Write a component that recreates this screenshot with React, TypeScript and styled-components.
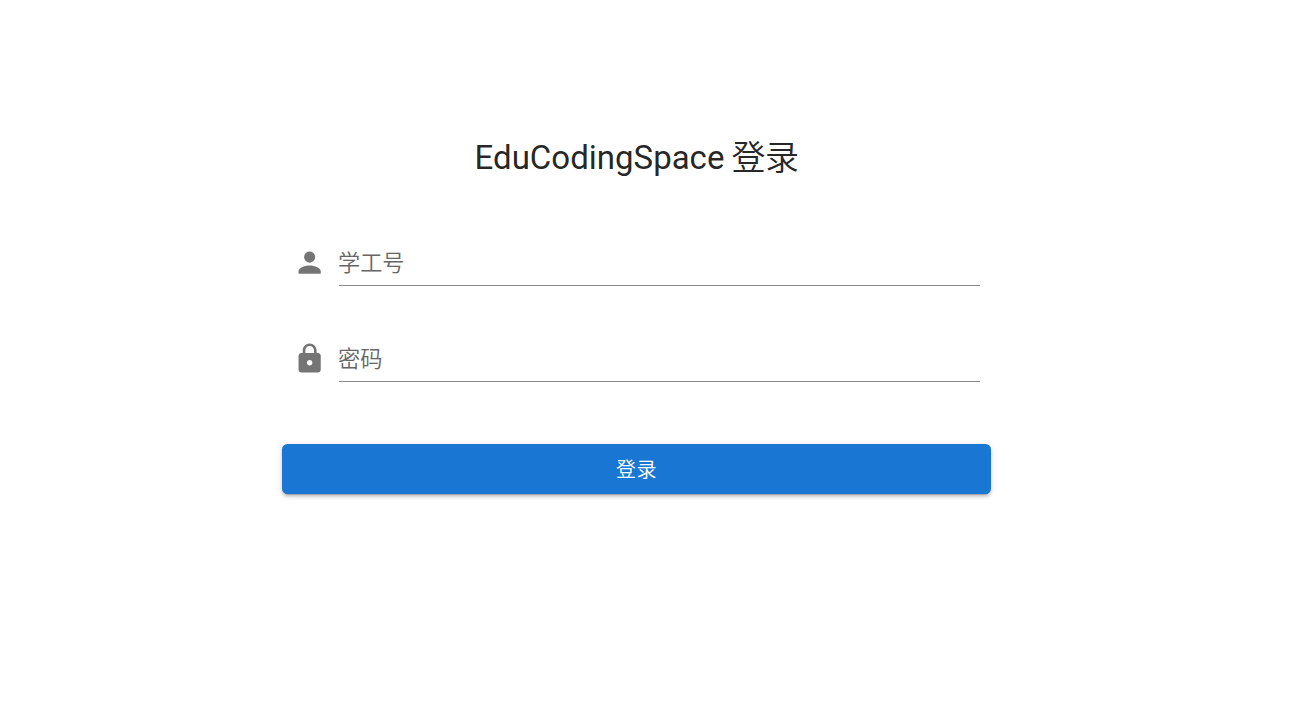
import React from "react";
import styled, { createGlobalStyle } from "styled-components";
import { MdPerson, MdLock } from "react-icons/md";

const GlobalStyle = createGlobalStyle`
  *, *::before, *::after { box-sizing: border-box; }
  body {
    margin: 0;
    background: #fff;
    color: rgba(0, 0, 0, 0.87);
    font-family: Roboto, "Noto Sans CJK SC", sans-serif;
    overflow: hidden;
  }
`;

const Page = styled.main`
  display: flex;
  flex-direction: column;
  align-items: center;
  width: 1273px;
  height: 726px;
  padding-top: 135px;
`;

const Title = styled.h1`
  display: flex;
  gap: 7px;
  height: 45px;
  margin: 0;
  font-size: 33px;
  font-weight: 400;
  line-height: 45px;
  white-space: nowrap;
`;

const TitleAction = styled.span`
  padding-top: 1px;
  font-size: 34px;
  font-weight: 350;
  letter-spacing: -0.5px;
`;

const Form = styled.form`
  display: flex;
  flex-direction: column;
  width: 709px;
  padding-top: 60px;
`;

const Field = styled.label`
  display: flex;
  align-items: flex-start;
  height: 46px;
  margin: 0 11px 50px;
`;

const FieldIcon = styled.span`
  display: flex;
  width: 46px;
  padding-top: 6px;
  color: #757575;
`;

const Input = styled.input`
  flex: 1;
  min-width: 0;
  height: 46px;
  padding: 0;
  border: 0;
  border-bottom: 1px solid #8c8c8c;
  outline: 0;
  background: transparent;
  color: inherit;
  font: 350 22.2px/45px Roboto, "Noto Sans CJK SC", sans-serif;
  text-indent: -1px;
  &::placeholder { color: #666; opacity: 1; }
`;

const LoginButton = styled.button`
  height: 50px;
  margin-top: 12px;
  padding: 2px 0 0;
  border: 0;
  border-radius: 5.5px;
  background: #1976d2;
  color: #fff;
  font: 350 20px/48px Roboto, "Noto Sans CJK SC", sans-serif;
  letter-spacing: 0.6px;
  box-shadow: 0 4px 1px -3px rgba(0, 0, 0, 0.2), 0 3px 3px rgba(0, 0, 0, 0.14), 0 1px 7px rgba(0, 0, 0, 0.12);
`;

export default function App() {
  return (
    <>
      <GlobalStyle />
      <Page>
        <Title>
          <span>EduCodingSpace</span>
          <TitleAction>登录</TitleAction>
        </Title>
        <Form>
          <Field>
            <FieldIcon><MdPerson size={33.3} /></FieldIcon>
            <Input type="text" placeholder="学工号" />
          </Field>
          <Field>
            <FieldIcon><MdLock size={33.3} /></FieldIcon>
            <Input type="password" placeholder="密码" />
          </Field>
          <LoginButton type="button">登录</LoginButton>
        </Form>
      </Page>
    </>
  );
}
